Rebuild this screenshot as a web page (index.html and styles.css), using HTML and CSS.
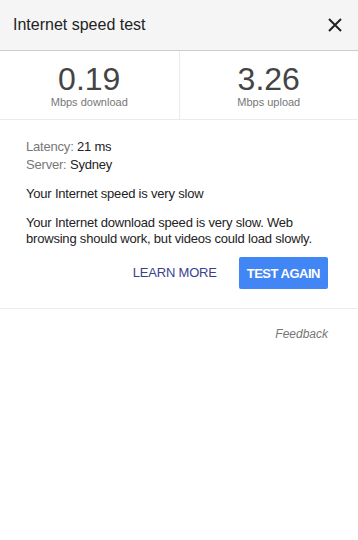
FILE: index.html
```html
<!DOCTYPE html>
<html lang="en">
<head>
  <meta charset="UTF-8">
  <meta name="viewport" content="width=device-width, initial-scale=1">
  <title>Internet speed test</title>
  <link rel="stylesheet" href="styles.css">
</head>
<body>

<header class="top">
  <h2>Internet speed test</h2>
  <button class="close" aria-label="Close">
    <svg width="14" height="14" viewBox="0 0 14 14"><path d="M1 1L13 13M13 1L1 13" stroke="#222" stroke-width="2"/></svg>
  </button>
</header>

<div class="stats">
  <div class="stat">
    <div class="num">0.19</div>
    <div class="unit">Mbps download</div>
  </div>
  <div class="stat">
    <div class="num">3.26</div>
    <div class="unit">Mbps upload</div>
  </div>
</div>

<div class="details">
  <div class="meta">
    <div><span class="label">Latency:</span> 21 ms</div>
    <div><span class="label">Server:</span> Sydney</div>
  </div>
  <p class="verdict">Your Internet speed is very slow</p>
  <p class="explain">Your Internet download speed is very slow. Web browsing should work, but videos could load slowly.</p>
  <div class="actions">
    <a class="learn" href="#">LEARN MORE</a>
    <button class="again">TEST AGAIN</button>
  </div>
</div>

<div class="feedback">Feedback</div>

</body>
</html>
```

FILE: styles.css
```css
body {
  font-family: "Liberation Sans", Arial, sans-serif;
  margin: 0;
  padding: 0;
  background: #fff;
  color: #222;
}
.top {
  display: flex;
  align-items: center;
  justify-content: space-between;
  height: 50px;
  padding: 0 16px 0 13px;
  background: #f5f5f5;
  border-bottom: 1px solid #ccc;
}
.top h2 {
  margin: 0;
  font-size: 16px;
  font-weight: normal;
  color: #222;
}
.close {
  border: none;
  background: none;
  padding: 0;
  width: 14px;
  height: 14px;
  display: flex;
}
.stats {
  display: flex;
  border-bottom: 1px solid #ebebeb;
}
.stat {
  flex: 1;
  text-align: center;
  padding: 11px 0 10px;
}
.stat + .stat {
  border-left: 1px solid #ebebeb;
}
.num {
  font-size: 32px;
  line-height: 34px;
  color: #444;
}
.unit {
  font-size: 11px;
  line-height: 13px;
  color: #777;
}
.details {
  padding: 18px 30px 19px 26px;
  font-size: 13px;
  line-height: 16px;
  letter-spacing: -0.2px;
  border-bottom: 1px solid #ebebeb;
}
.meta div {
  line-height: 18px;
}
.label {
  color: #777;
}
.details p {
  margin: 0;
}
.details .verdict {
  margin-top: 12px;
}
.details .explain {
  margin-top: 13px;
}
.actions {
  display: flex;
  justify-content: flex-end;
  align-items: center;
  gap: 22px;
  margin-top: 10px;
}
.learn {
  color: #3b3f8f;
  text-decoration: none;
  font-size: 13px;
  letter-spacing: -0.2px;
}
.again {
  background: #4285f4;
  color: #fff;
  border: none;
  border-radius: 2px;
  height: 32px;
  padding: 0 8px;
  font-family: inherit;
  font-size: 13px;
  font-weight: bold;
  letter-spacing: -0.5px;
}
.feedback {
  text-align: right;
  padding: 18px 30px 0 0;
  font-size: 12px;
  font-style: italic;
  color: #777;
}
```
